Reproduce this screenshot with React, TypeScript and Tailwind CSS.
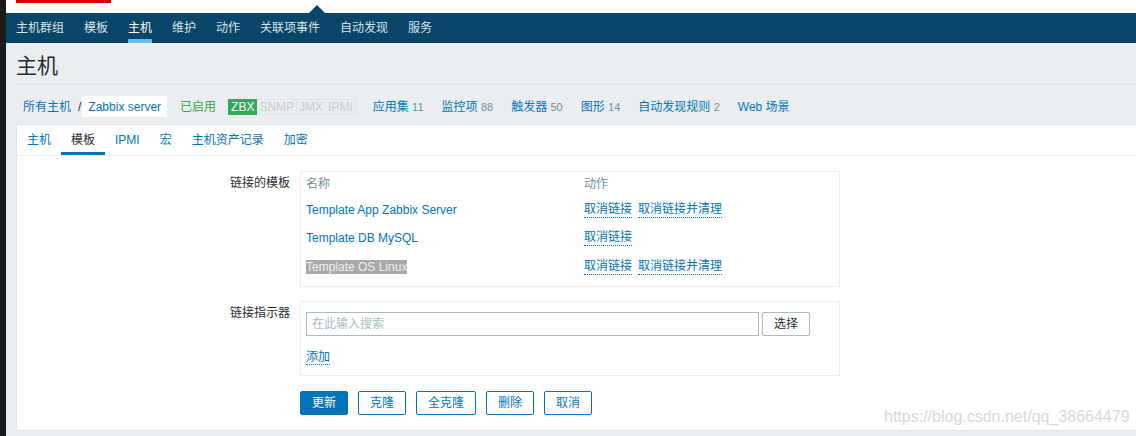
import React from 'react';

const navItems = ['主机群组', '模板', '主机', '维护', '动作', '关联项事件', '自动发现', '服务'];
const tabs = ['主机', '模板', 'IPMI', '宏', '主机资产记录', '加密'];

type Tpl = { name: string; clear: boolean; selected?: boolean };
const templates: Tpl[] = [
  { name: 'Template App Zabbix Server', clear: true },
  { name: 'Template DB MySQL', clear: false },
  { name: 'Template OS Linux', clear: true, selected: true },
];

function DotLink({ children }: { children: React.ReactNode }) {
  return (
    <span className="text-[#0275b8] border-b border-dotted border-[#0275b8] leading-[15px]">{children}</span>
  );
}

export default function App() {
  return (
    <div className="relative flex h-[436px] w-[1136px] overflow-hidden bg-[#ebeef0] text-[12px] text-[#1f2c33] font-['Liberation_Sans','Noto_Sans_CJK_SC',sans-serif]">
      {/* left dark strip */}
      <div className="w-[6px] shrink-0 bg-[#1b1b1b]" />

      <div className="flex flex-1 flex-col">
        {/* header strip */}
        <div className="relative h-[13px] bg-white">
          <div className="ml-[10px] h-[3px] w-[95px] bg-[#d40000]" />
          <div className="absolute left-[303px] top-[5px] h-0 w-0 border-x-[8px] border-b-[8px] border-x-transparent border-b-[#0a466a]" />
        </div>

        {/* main nav */}
        <div className="flex h-[30px] bg-[#0a466a]">
          {navItems.map((n) => (
            <div key={n} className="relative flex items-center px-[10px]">
              <span className={n === '主机' ? 'text-white' : 'text-[#dbe3e8]'}>{n}</span>
              {n === '主机' && <div className="absolute bottom-0 left-[10px] right-[10px] h-[4px] bg-[#69bbef]" />}
            </div>
          ))}
        </div>

        {/* title */}
        <div className="ml-[10px] h-[42px] border-b border-[#dde3e6] pt-[11px]">
          <h1 className="text-[21px] leading-[24px] text-[#1f2c33]">主机</h1>
        </div>

        {/* breadcrumb / host nav */}
        <div className="flex h-[39px] items-center pl-[17px] pt-[4px]">
          <span className="text-[#0275b8]">所有主机</span>
          <span className="ml-[7px] text-[#1f2c33]">/</span>
          <span className="ml-[1px] flex h-[21px] items-center bg-white px-[6px] text-[#0275b8]">Zabbix server</span>
          <span className="ml-[13px] text-[#429e47]">已启用</span>
          <div className="ml-[12px] flex h-[16px] text-[12px] leading-[14px]">
            <span className="border border-[#37a85a] bg-[#37a85a] px-[2px] text-white">ZBX</span>
            <span className="border border-[#dfe4e7] border-l-0 px-[2px] text-[#c6cdd1]">SNMP</span>
            <span className="border border-[#dfe4e7] border-l-0 px-[2px] text-[#c6cdd1]">JMX</span>
            <span className="border border-[#dfe4e7] border-l-0 px-[2px] text-[#c6cdd1]">IPMI</span>
          </div>
          <span className="ml-[17px] text-[#0275b8]">应用集 <span className="text-[11px] text-[#768d99]">11</span></span>
          <span className="ml-[18px] text-[#0275b8]">监控项 <span className="text-[11px] text-[#768d99]">88</span></span>
          <span className="ml-[18px] text-[#0275b8]">触发器 <span className="text-[11px] text-[#768d99]">50</span></span>
          <span className="ml-[18px] text-[#0275b8]">图形 <span className="text-[11px] text-[#768d99]">14</span></span>
          <span className="ml-[18px] text-[#0275b8]">自动发现规则 <span className="text-[11px] text-[#768d99]">2</span></span>
          <span className="ml-[18px] text-[#0275b8]">Web 场景</span>
        </div>

        {/* panel */}
        <div className="ml-[10px] flex h-[307px] flex-col border border-r-0 border-[#dfe4e7] bg-white">
          <div className="flex h-[31px] border-b border-[#ebeef0]">
            {tabs.map((t) => (
              <div key={t} className="relative flex items-center px-[10px]">
                <span className={t === '模板' ? 'text-[#1f2c33]' : 'text-[#0275b8]'}>{t}</span>
                {t === '模板' && <div className="absolute bottom-0 left-0 right-0 h-[3px] bg-[#0275b8]" />}
              </div>
            ))}
          </div>

          <div className="flex flex-col pt-[15px]">
            {/* linked templates */}
            <div className="flex">
              <div className="w-[273px] pt-[5px] text-right leading-[14px]">链接的模板</div>
              <div className="ml-[10px] flex h-[116px] w-[540px] flex-col border border-[#ebeef0] px-[5px]">
                <div className="flex h-[24px] items-center text-[#768d99]">
                  <span className="w-[278px]">名称</span>
                  <span>动作</span>
                </div>
                {templates.map((t, i) => (
                  <div key={t.name} className={`flex items-center ${i === 0 ? 'h-[27px]' : 'h-[29px]'}`}>
                    <span className="w-[278px]">
                      {t.selected ? (
                        <span className="bg-[#a9a9a9] text-[#eeeeee]">{t.name}</span>
                      ) : (
                        <span className="text-[#0275b8]">{t.name}</span>
                      )}
                    </span>
                    <span className="flex gap-[6px]">
                      <DotLink>取消链接</DotLink>
                      {t.clear && <DotLink>取消链接并清理</DotLink>}
                    </span>
                  </div>
                ))}
              </div>
            </div>

            {/* linked indicators */}
            <div className="mt-[14px] flex">
              <div className="w-[273px] pt-[5px] text-right leading-[14px]">链接指示器</div>
              <div className="ml-[10px] flex h-[75px] w-[540px] flex-col border border-[#ebeef0] px-[5px] pt-[10px]">
                <div className="flex gap-[3px]">
                  <div className="flex h-[24px] w-[453px] items-center border border-[#acbbc2] px-[5px] text-[#acbbc2]">在此输入搜索</div>
                  <div className="flex h-[24px] w-[48px] items-center justify-center rounded-[2px] border border-[#acbbc2] text-[#1f2c33]">选择</div>
                </div>
                <div className="mt-[12px]">
                  <DotLink>添加</DotLink>
                </div>
              </div>
            </div>

            {/* buttons */}
            <div className="ml-[283px] mt-[15px] flex gap-[10px]">
              <div className="flex h-[24px] items-center rounded-[2px] border border-[#0275b8] bg-[#0275b8] px-[11px] text-white">更新</div>
              {['克隆', '全克隆', '删除', '取消'].map((b) => (
                <div key={b} className="flex h-[24px] items-center rounded-[2px] border border-[#0275b8] px-[11px] text-[#0275b8]">{b}</div>
              ))}
            </div>
          </div>
        </div>
      </div>

      <div className="absolute left-[884px] top-[406px] text-[16px] leading-[22px] text-[#d3d9dd]">https://blog.csdn.net/qq_38664479</div>
    </div>
  );
}
